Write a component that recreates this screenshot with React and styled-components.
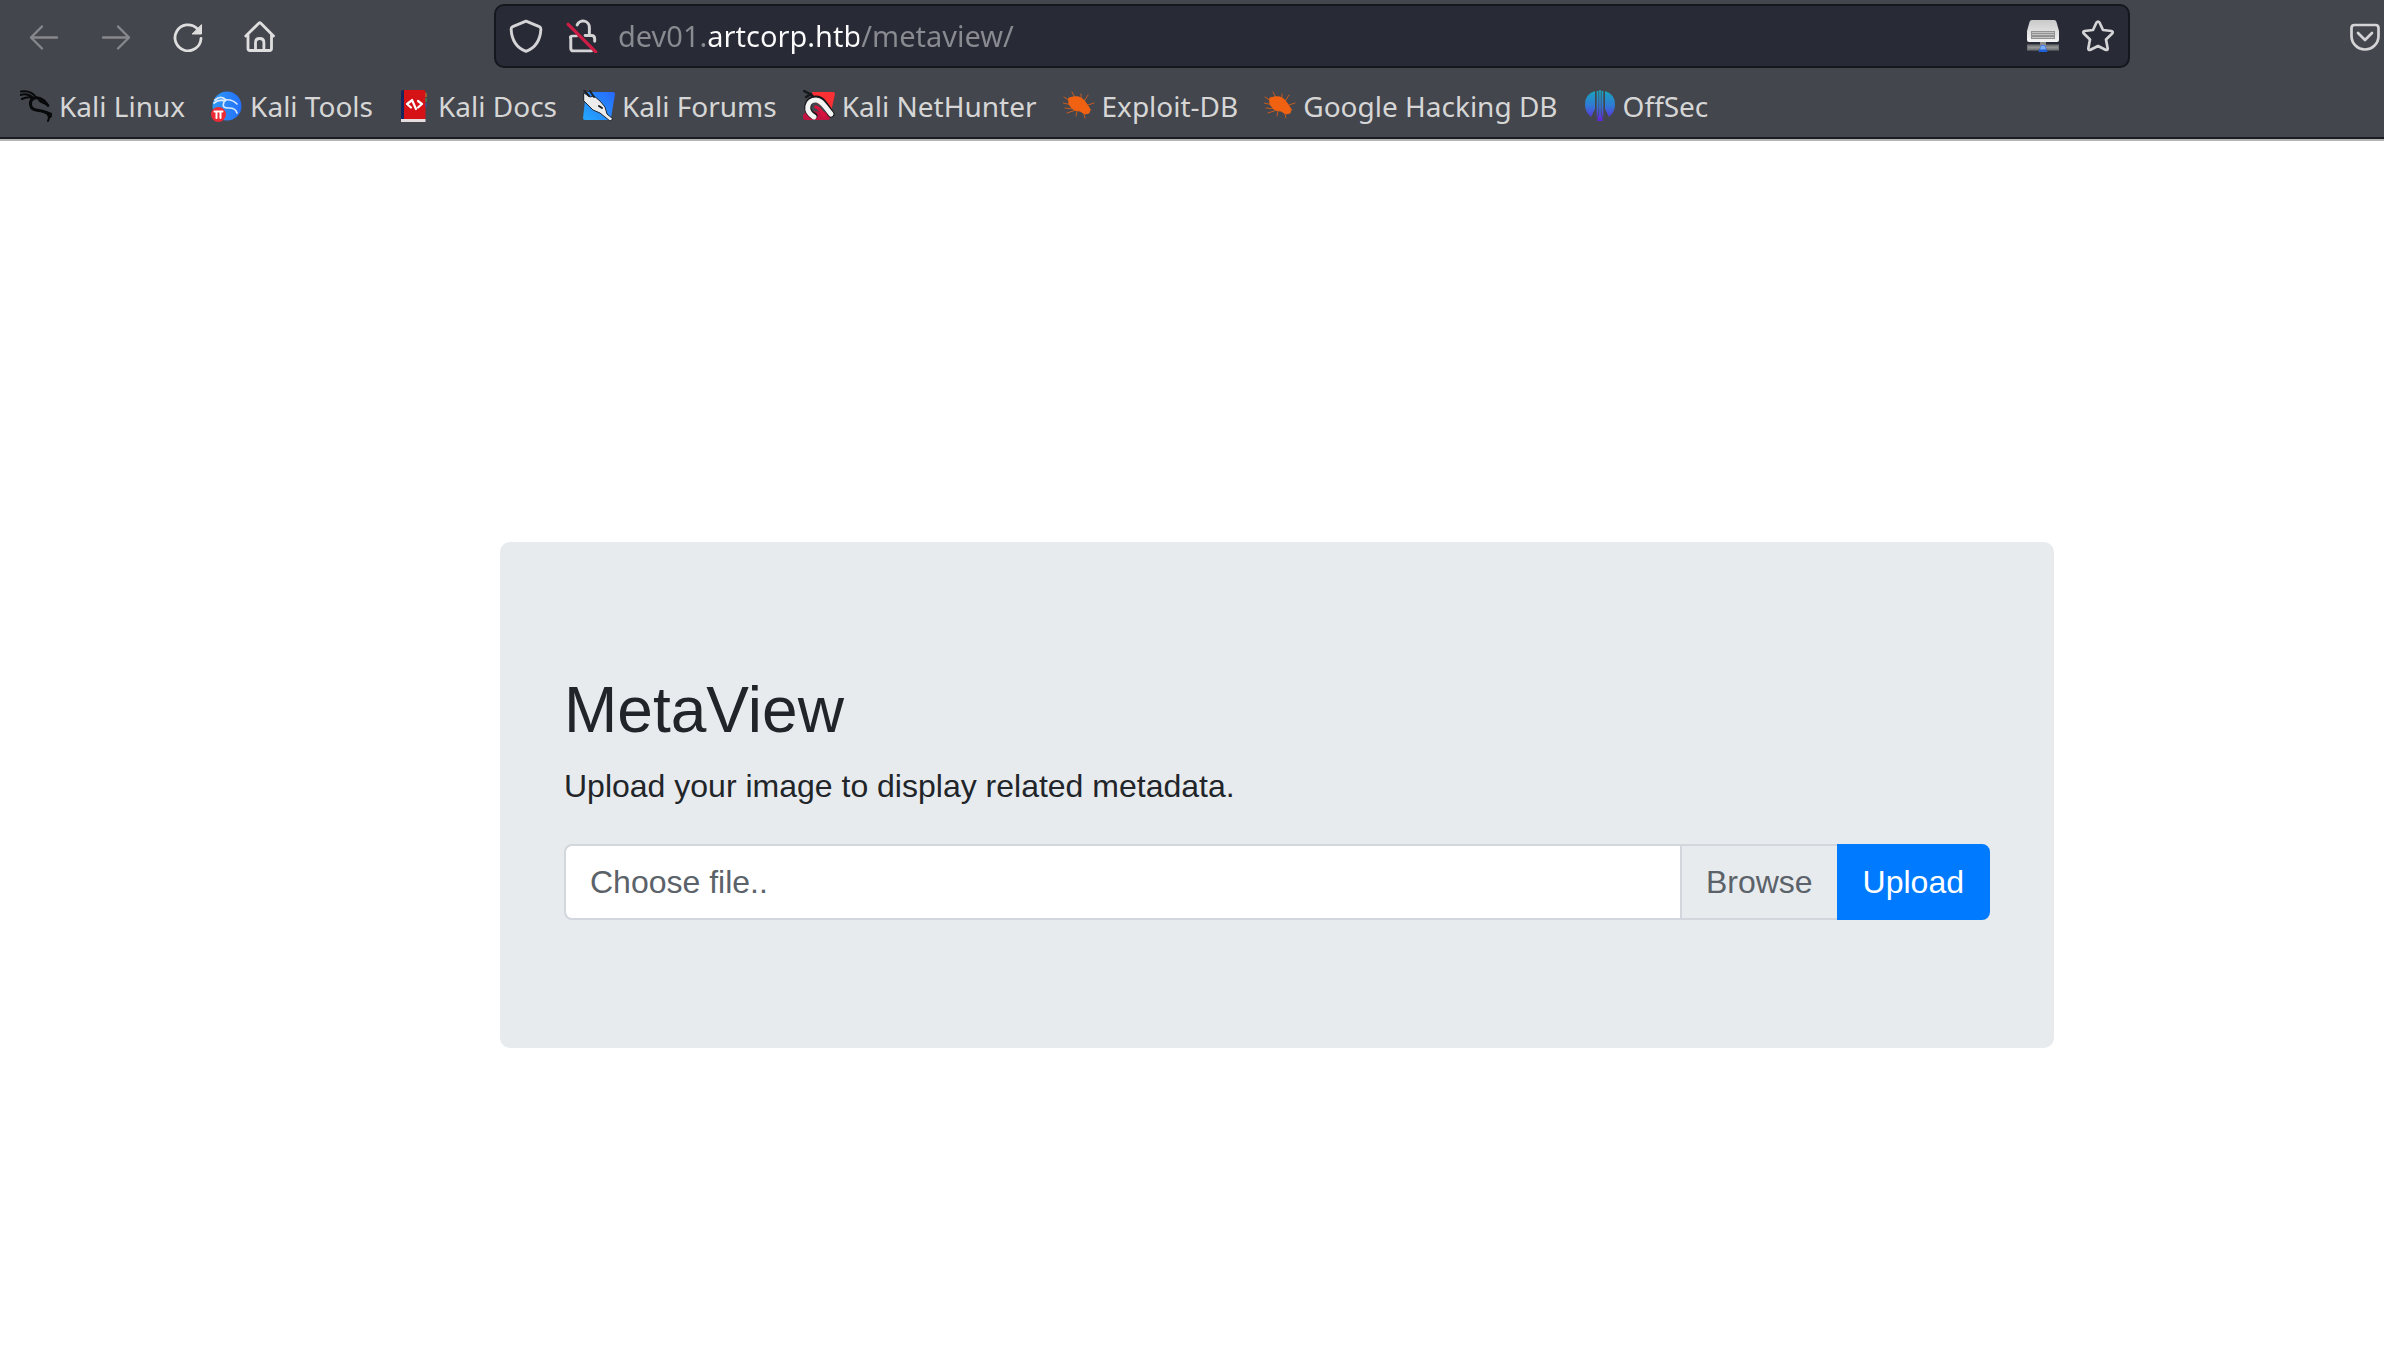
import React, { useState } from "react";
import styled, { createGlobalStyle } from "styled-components";

const GlobalStyle = createGlobalStyle`
  *, *::before, *::after { box-sizing: border-box; }
  html, body { margin: 0; padding: 0; }
  body { background: #fff; }
`;

const Window = styled.div`
  display: flex;
  flex-direction: column;
  min-height: 100vh;
`;

const Chrome = styled.header`
  display: flex;
  flex-direction: column;
  background: #44464d;
  border-bottom: 2px solid #b4b4b5;
  box-shadow: inset 0 -2px 0 #1b1c21;
  color: #d6d6d6;
  font-family: "Noto Sans", "Open Sans", sans-serif;
  font-size: 28px;
  line-height: 38px;
`;

const Toolbar = styled.div`
  display: flex;
  align-items: center;
  padding: 4px 3px 4px 8px;
`;

const NavGroup = styled.nav`
  display: flex;
  flex: 0 0 486px;
`;

const NavButton = styled.button`
  display: flex;
  align-items: center;
  justify-content: center;
  width: 72px;
  height: 64px;
  padding: 0;
  border: 0;
  background: none;
  color: #dedede;

  &:disabled { color: #86878b; }
`;

const AddressBar = styled.div`
  display: flex;
  flex: 1;
  align-items: center;
  height: 64px;
  padding: 0 14px 0 13px;
  gap: 18px;
  border: 2px solid #16171c;
  border-radius: 10px;
  background: #282a36;
`;

const BarGroup = styled.div`
  display: flex;
  flex: none;
  align-items: center;
  gap: 23px;
`;

const BarButton = styled.button`
  display: flex;
  flex: none;
  padding: 0;
  border: 0;
  background: none;
  color: #d4d4d6;
`;

const Address = styled.input`
  flex: 1;
  min-width: 0;
  padding: 0;
  border: 0;
  outline: 0;
  color: #fbfbfb;
  font: inherit;
  font-size: 29px;
  background: linear-gradient(90deg, #8a8b91 88px, #fbfbfb 88px, #fbfbfb 241px, #8a8b91 241px);
  background-clip: text;
  -webkit-background-clip: text;
  -webkit-text-fill-color: transparent;
`;

const Extras = styled.div`
  display: flex;
  flex: 0 0 251px;
  justify-content: flex-end;
`;

const Bookmarks = styled.nav`
  display: flex;
  align-items: center;
  gap: 26px;
  padding: 15px 20px 14px;
`;

const Bookmark = styled.a`
  display: flex;
  align-items: center;
  gap: 7px;
  color: inherit;
  text-decoration: none;
  white-space: nowrap;
`;

const Page = styled.main`
  flex: 1;
  padding: 401px 330px 0 500px;
  color: #212529;
  font-family: "Liberation Sans", Arial, sans-serif;
  font-size: 32px;
  line-height: 48px;
`;

const Card = styled.section`
  padding: 128px 64px;
  border-radius: 10px;
  background: #e7ebee;
`;

const Title = styled.h1`
  margin: 0 0 12px;
  font-size: 64px;
  font-weight: 400;
  line-height: 80px;
`;

const Lead = styled.p`
  margin: 0 0 34px;
`;

const UploadForm = styled.form`
  display: flex;
`;

const FileField = styled.label`
  position: relative;
  display: flex;
  flex: 1;
  border: 2px solid #d1d7dc;
  border-right: 0;
  border-radius: 8px 0 0 8px;
  background: #fff;
  color: #5b6269;
  overflow: hidden;
`;

const FileInput = styled.input`
  position: absolute;
  inset: 0;
  width: 100%;
  opacity: 0;
`;

const FileName = styled.span`
  flex: 1;
  padding: 12px 24px;
`;

const Browse = styled.span`
  padding: 12px 24px;
  border-left: 2px solid #d1d7dc;
  background: #e7ebee;
`;

const Submit = styled.button`
  padding: 12px 24px;
  border: 2px solid #007bff;
  border-radius: 0 8px 8px 0;
  background: #007bff;
  color: #fff;
  font: inherit;
`;

const Icon = ({ size = 32, children }) => (
  <svg
    width={size}
    height={size}
    viewBox="0 0 32 32"
    fill="none"
    stroke="currentColor"
    strokeWidth="2.4"
    strokeLinecap="round"
    strokeLinejoin="round"
    aria-hidden="true"
  >
    {children}
  </svg>
);

const BackIcon = () => (
  <Icon>
    <path d="M29 17.500H3M14 6.500 3 17.500 14 28.500" />
  </Icon>
);

const ForwardIcon = () => (
  <Icon>
    <path d="M3 17.500h26M18 6.500l11 11L18 28.500" />
  </Icon>
);

const ReloadIcon = () => (
  <Icon>
    <path d="M29 18.500A13 13 0 1 1 25 8.400" strokeWidth="2.8" />
    <path d="M29.500 5v9h-9z" fill="currentColor" strokeWidth="1" />
  </Icon>
);

const HomeIcon = () => (
  <Icon>
    <path d="M1.800 16 14.800 3.200q1-.900 2 0L29.500 16M4 15v13.500q0 2 2 2h19.500q2 0 2-2V15" strokeWidth="2.800" />
    <path d="M11.500 30v-7.500q0-4 4.200-4t4.200 4V30" strokeWidth="2.800" />
  </Icon>
);

const ShieldIcon = () => (
  <Icon size={34}>
    <path d="M16 2 28.500 7.200q1.500.600 1.500 2.300C29.500 20 25 27 16 30.500 7 27 2.500 20 2 9.500q0-1.700 1.500-2.300z" strokeWidth="2.700" />
  </Icon>
);

const InsecureIcon = () => (
  <Icon size={34}>
    <path d="M10.500 5.500A6 6 0 0 1 22 8v6.500M18 15.500h6q3 0 3 3V21M4.500 17.500v10q0 2.500 2.500 2.500h17" strokeWidth="2.800" />
    <path d="M4 17.500q0-1.500 2-1.500h4" strokeWidth="2.400" />
    <path d="M2 5 28 31" stroke="#cf1d45" strokeWidth="3" />
  </Icon>
);

const DriveIcon = () => (
  <Icon>
    <defs>
      <linearGradient id="drive-top" x1="0" y1="0" x2="0" y2="1">
        <stop offset="0" stopColor="#c9c9c9" />
        <stop offset="1" stopColor="#f4f4f4" />
      </linearGradient>
    </defs>
    <g stroke="none">
      <path d="M5 0h22q2 0 2.500 2L32 11v9q0 2-2 2H2q-2 0-2-2v-9L2.500 2Q3 0 5 0z" fill="url(#drive-top)" />
      <path d="M4 11h24v8H4z" fill="#929292" />
      <path d="M5 12h22v1H5zM5 14h22v1H5zM5 17h22v1H5z" fill="#c4c4c4" />
      <path d="M0 24.500h32v6H0z" fill="#747678" />
      <path d="M1 26.500h30v2H1z" fill="#949696" />
      <path d="M13 22h6v4h-6z" fill="#8b8b8b" />
      <path d="m14 25h4l2.500 7h-9z" fill="#1f5fd6" />
      <path d="M14 25.500h4l1 4h-6z" fill="#79a9f2" />
    </g>
  </Icon>
);

const StarIcon = () => (
  <Icon>
    <path
      d="M14.500 2.500q1.500-2 3 0L21 10l8.500 1q2 .600.700 2.500L24 19.500l1.700 9q-.200 2-2.200 1.300L16 26l-7.500 3.800q-2 .700-2.200-1.300l1.700-9-6.200-6q-1.300-1.900.700-2.500L11 10z"
      strokeWidth="2.700"
    />
  </Icon>
);

const PocketIcon = () => (
  <Icon>
    <path d="M5.500 5h21q3 0 3 3v8c0 7.500-6 13.500-13.500 13.500S2.500 23.500 2.500 16V8q0-3 3-3z" strokeWidth="2.700" />
    <path d="m9 13 7 7 7-7" strokeWidth="2.700" />
  </Icon>
);

const KaliIcon = () => (
  <Icon>
    <g stroke="#08090a">
      <path d="M1 1.500c7-1 12 1 15 6M0 5c5-1.500 9-1 13 2.500M2 9c4-2 8-2 11-1" strokeWidth="2" />
      <path d="M13 8.500c-4 3-3.500 10.500 3 11.500 6 1 10 1 13 4.500" strokeWidth="3" />
      <path d="M12 9c4-2 8-1.500 12 1.500l4 5" strokeWidth="2.800" />
      <path d="m17 7 4 1 8 8-9-4z" fill="#08090a" strokeWidth="1" />
      <path d="m26 22 5.500 2-1 3M28 25c1.500 2 1 4 0 6" strokeWidth="2" />
    </g>
  </Icon>
);

const ToolsIcon = () => (
  <Icon>
    <defs>
      <linearGradient id="tools-disc" x1="0" y1="0" x2="1" y2="0">
        <stop offset="0" stopColor="#2c9af5" />
        <stop offset="1" stopColor="#256ffb" />
      </linearGradient>
    </defs>
    <circle cx="16" cy="16" r="14.500" fill="url(#tools-disc)" stroke="none" />
    <g stroke="#d7e8fc">
      <path d="M4 10c5-4 8-3 11 0M3 13c4-3 8-3 11-2" strokeWidth="2" />
      <path d="M14 10c5-1 8 0 12 4M13 12c-2 5 0 6 5 6 4 0 7 1 8 5" strokeWidth="1.700" />
    </g>
    <circle cx="7.500" cy="24.500" r="7.500" fill="#ed2b35" stroke="none" />
    <path d="M3.500 21.500h8M5.500 21.500v6.500M9.500 21.500v6.500" stroke="#fff" strokeWidth="2" />
  </Icon>
);

const DocsIcon = () => (
  <Icon>
    <g stroke="none">
      <path d="M2 1.500Q2 0 4 0h2v29H2z" fill="#17275e" />
      <path d="M5 0h20q1.500 0 1.500 1.500V29H5z" fill="#d51317" />
      <path d="M2 29h24.500v3H2z" fill="#e6dede" />
      <path d="M26.500 3h1v4h-1z" fill="#ec7b1c" />
      <path d="M26.500 8h1v4h-1z" fill="#31a35a" />
      <path d="M26.500 13h1v4h-1z" fill="#265bc1" />
    </g>
    <path d="m12 11-4 3 4 3.500M19 11l4 3-4 3.500M13 10l4 9" stroke="#fff" strokeWidth="2.200" />
  </Icon>
);

const ForumsIcon = () => (
  <Icon>
    <defs>
      <linearGradient id="forums-tile" x1="0" y1="1" x2="1" y2="0">
        <stop offset="0" stopColor="#24a9ff" />
        <stop offset="1" stopColor="#2768fb" />
      </linearGradient>
    </defs>
    <path d="M3 2h27q2 0 2 2l-4 24q-.500 2-3 2H2q-2 0-2-2z" fill="url(#forums-tile)" stroke="none" />
    <path d="m1 3 6 4 4-1 6 5 5 6 2 7 6 5-3 2-10-8-7-3-9-9z" fill="#ececec" stroke="#222831" strokeWidth="1" />
    <path d="m1 0 5 6M7 1l4 6M16 16l3 2" stroke="#1e2228" strokeWidth="2" />
  </Icon>
);

const NetHunterIcon = () => (
  <Icon>
    <path d="M9 2h21q2 0 2 2l-4 18-17-11z" fill="#fb3035" stroke="none" />
    <path d="m0 25 4-4 20 1 4 4-2 4H3q-3 0-3-3z" fill="#c2123f" stroke="none" />
    <path d="M1 1l6 3 5 4M3 7l5-3" stroke="#17181b" strokeWidth="2.400" />
    <path d="M11 26C1 21 4 9 13 9c6 0 9 6 15 15" stroke="#17181b" strokeWidth="7" />
    <path d="M11 27C1 21 4 10 13 10c6 0 8 6 15 14" stroke="#f4f4f4" strokeWidth="5" />
    <path d="M13 17q5 2 8 9" stroke="#d7133d" strokeWidth="3.500" />
  </Icon>
);

const BugIcon = () => (
  <Icon>
    <g stroke="#c65b20" strokeWidth="1">
      <path d="m9 2 5 9M1 7l9 6M0 13l9 2M18 4v8M25 5l-5 8M31 13l-9 3M28 20l-6-2M4 23l9-3M2 18l9 1M20 21l2 7M14 21l-1 5" />
    </g>
    <path d="M6 8q5-2 10-1 5 2 7 6l4 6-1 4-4 1-5-3Q9 21 6 14z" fill="#f06212" stroke="#f06212" strokeWidth="1" />
  </Icon>
);

const OffSecIcon = () => (
  <Icon>
    <defs>
      <linearGradient id="offsec" gradientUnits="userSpaceOnUse" x1="0" y1="1" x2="0" y2="31">
        <stop offset="0" stopColor="#1aa3bd" />
        <stop offset="0.5" stopColor="#3178d6" />
        <stop offset="1" stopColor="#6422dc" />
      </linearGradient>
    </defs>
    <g fill="url(#offsec)" stroke="none">
      <path d="M11 1v18l-4 8Q1 22 1 14.500 1 4 11 1z" />
      <path d="M21 1v18l4 8q6-5 6-12.500Q31 4 21 1z" />
      <path d="M12.700 1h1.800v21l-1.800 8zM17.500 1h1.800v29l-1.800-8z" />
      <path d="M15.200 0h1.600v22l2 9h-5.600l2-9z" />
    </g>
  </Icon>
);

const BOOKMARKS = [
  { label: "Kali Linux", Glyph: KaliIcon },
  { label: "Kali Tools", Glyph: ToolsIcon },
  { label: "Kali Docs", Glyph: DocsIcon },
  { label: "Kali Forums", Glyph: ForumsIcon },
  { label: "Kali NetHunter", Glyph: NetHunterIcon },
  { label: "Exploit-DB", Glyph: BugIcon },
  { label: "Google Hacking DB", Glyph: BugIcon },
  { label: "OffSec", Glyph: OffSecIcon },
];

export default function App() {
  const [fileName, setFileName] = useState("");

  return (
    <Window>
      <GlobalStyle />
      <Chrome>
        <Toolbar>
          <NavGroup aria-label="Navigation">
            <NavButton type="button" aria-label="Back" disabled><BackIcon /></NavButton>
            <NavButton type="button" aria-label="Forward" disabled><ForwardIcon /></NavButton>
            <NavButton type="button" aria-label="Reload"><ReloadIcon /></NavButton>
            <NavButton type="button" aria-label="Home"><HomeIcon /></NavButton>
          </NavGroup>
          <AddressBar>
            <BarGroup>
              <BarButton type="button" aria-label="Tracking protection"><ShieldIcon /></BarButton>
              <BarButton type="button" aria-label="Connection not secure"><InsecureIcon /></BarButton>
            </BarGroup>
            <Address type="text" aria-label="Address" defaultValue="dev01.artcorp.htb/metaview/" />
            <BarGroup>
              <BarButton type="button" aria-label="Proxy"><DriveIcon /></BarButton>
              <BarButton type="button" aria-label="Bookmark this page"><StarIcon /></BarButton>
            </BarGroup>
          </AddressBar>
          <Extras>
            <BarButton type="button" aria-label="Save to Pocket"><PocketIcon /></BarButton>
          </Extras>
        </Toolbar>
        <Bookmarks aria-label="Bookmarks">
          {BOOKMARKS.map(({ label, Glyph }) => (
            <Bookmark key={label} href="#">
              <Glyph />
              {label}
            </Bookmark>
          ))}
        </Bookmarks>
      </Chrome>
      <Page>
        <Card>
          <Title>MetaView</Title>
          <Lead>Upload your image to display related metadata.</Lead>
          <UploadForm onSubmit={(event) => event.preventDefault()}>
            <FileField>
              <FileInput
                type="file"
                accept="image/*"
                onChange={(event) => setFileName(event.target.files[0]?.name ?? "")}
              />
              <FileName>{fileName || "Choose file.."}</FileName>
              <Browse>Browse</Browse>
            </FileField>
            <Submit type="submit">Upload</Submit>
          </UploadForm>
        </Card>
      </Page>
    </Window>
  );
}
